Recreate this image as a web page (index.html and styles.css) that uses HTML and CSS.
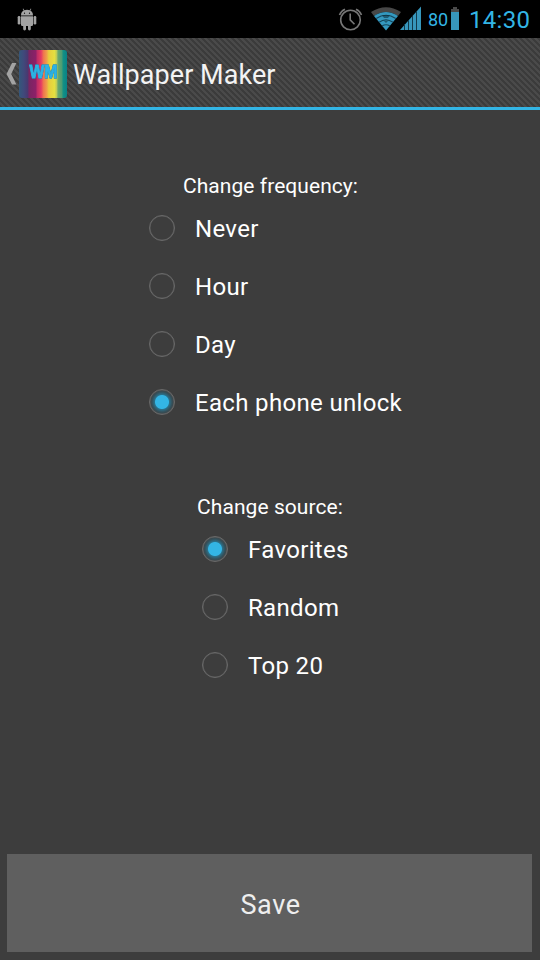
FILE: index.html
```html
<!DOCTYPE html>
<html lang="en">
<head>
<meta charset="utf-8">
<title>Wallpaper Maker</title>
<link rel="stylesheet" href="styles.css">
</head>
<body>
<header class="status">
  <svg class="droid" width="20" height="24" viewBox="0 0 20 24" fill="#a3a3a3">
    <path d="M4 7.4C4 4.8 5.2 3.4 6.7 2.6L5.7.9l.5-.4 1.2 1.8a8 8 0 0 1 5.2 0L13.8.5l.5.4-1 1.7C14.8 3.4 16 4.8 16 7.4Z"/>
    <path d="M4 8.200h12v8.600q0 1.200-1.200 1.200h-1v3a1.400 1.400 0 0 1-2.800 0v-3H9v3a1.400 1.400 0 0 1-2.800 0v-3h-1Q4 18 4 16.800Z"/>
    <rect x=".7" y="8" width="2.700" height="8.500" rx="1.300"/><rect x="16.600" y="8" width="2.700" height="8.500" rx="1.300"/>
    <circle cx="7.500" cy="5.200" r=".6" fill="#000"/><circle cx="12.500" cy="5.200" r=".6" fill="#000"/>
  </svg>
  <svg class="alarm" width="26" height="24" viewBox="0 0 26 24" fill="none" stroke="#777" stroke-width="1.600">
    <circle cx="12.500" cy="13" r="9.800"/>
    <path d="M12.200 6.500v6.300l4.300 4.400M1.500 8Q3 4 7 2.300M23.500 8Q22 4 18 2.300"/>
  </svg>
  <svg class="wifi" width="30" height="24" viewBox="0 0 30 24">
    <path d="M0 5Q15-4.500 30 5L27 9Q15 1 3 9Z" fill="#474747"/>
    <path d="M3 9Q15 1 27 9L15 23.500Z" fill="#3498bf"/>
    <path d="M5.200 11.500Q15 5 24.800 11.500M8 15.300Q15 10.500 22 15.300M11 19Q15 16.500 19 19" fill="none" stroke="#15455a" stroke-width="1.100"/>
    <path d="M11 8h8l-2 3h-4zM13 14h4l-2 2z" fill="#0b2937" opacity=".55"/>
  </svg>
  <svg class="signal" width="22" height="24" viewBox="0 0 22 24">
    <path d="M0 23 21 -.5V23Z" fill="#3796bb"/>
    <path d="M4.500 17v6M8.500 13v10M12.500 9v14M16.500 4v19" stroke="#12394a" stroke-width="1"/>
  </svg>
  <span class="percent">80</span>
  <svg class="battery" width="8" height="23" viewBox="0 0 8 23"><path d="M2 0h4v2h2v3H0V2h2Z" fill="#4a4a4a"/><path d="M0 5h8v18H0Z" fill="#3796bb"/></svg>
  <time class="clock">14:30</time>
</header>
<nav class="bar">
  <svg class="back" width="11" height="22" viewBox="0 0 11 22"><path d="M6 0H10.400L5.200 11l5.200 10.500H6L.5 11Z" fill="#a3a3a3"/></svg>
  <svg class="logo" width="48" height="48" viewBox="0 0 48 48">
    <defs><linearGradient id="rainbow">
      <stop offset="0" stop-color="#34587b"/><stop offset=".1" stop-color="#40497b"/><stop offset=".18" stop-color="#493970"/>
      <stop offset=".21" stop-color="#782562"/><stop offset=".35" stop-color="#8d2068"/>
      <stop offset=".38" stop-color="#bd2d66"/><stop offset=".46" stop-color="#e53b64"/>
      <stop offset=".51" stop-color="#ee754f"/><stop offset=".58" stop-color="#efa049"/>
      <stop offset=".62" stop-color="#e7cc3d"/><stop offset=".74" stop-color="#e5df40"/>
      <stop offset=".79" stop-color="#b5c85c"/><stop offset=".81" stop-color="#6ba86d"/><stop offset=".89" stop-color="#4c9c73"/>
      <stop offset=".92" stop-color="#139084"/><stop offset="1" stop-color="#078288"/>
    </linearGradient></defs>
    <rect width="48" height="48" rx="3" fill="url(#rainbow)"/>
    <text class="wm" x="10.500" y="28.300" textLength="28" lengthAdjust="spacingAndGlyphs">WM</text>
  </svg>
  <h1 class="title">Wallpaper Maker</h1>
</nav>
<main class="content">
  <section class="group frequency">
    <h2 class="heading"><span>Change frequency:</span></h2>
    <div class="option"><i class="radio"></i><span>Never</span></div>
    <div class="option"><i class="radio"></i><span>Hour</span></div>
    <div class="option"><i class="radio"></i><span>Day</span></div>
    <div class="option"><i class="radio on"></i><span>Each phone unlock</span></div>
  </section>
  <section class="group source">
    <h2 class="heading"><span>Change source:</span></h2>
    <div class="option"><i class="radio on"></i><span>Favorites</span></div>
    <div class="option"><i class="radio"></i><span>Random</span></div>
    <div class="option"><i class="radio"></i><span>Top 20</span></div>
  </section>
</main>
<button class="save">Save</button>
</body>
</html>
```
FILE: styles.css
```css
* { box-sizing: border-box; }
body {
  margin: 0;
  width: 540px;
  height: 960px;
  overflow: hidden;
  display: flex;
  flex-direction: column;
  background: #3d3d3d;
  color: #fff;
  font-family: Roboto, "Liberation Sans", sans-serif;
}
svg { display: block; flex: none; overflow: visible; }
.status {
  height: 38px;
  flex: none;
  display: flex;
  align-items: flex-start;
  padding: 7px 9px 0 17px;
  background: #000;
  color: #33b5e5;
}
.droid { margin-top: 1px; }
.alarm { margin: 0 7px 0 auto; }
.signal { margin-left: -1px; }
.percent {
  width: 23px;
  margin-left: 6px;
  font-size: 18px;
  line-height: 26px;
}
.clock {
  width: 62px;
  margin-left: 10px;
  font-size: 24px;
  line-height: 26px;
  letter-spacing: .3px;
  white-space: nowrap;
}
.bar {
  height: 72px;
  flex: none;
  display: flex;
  align-items: center;
  padding-left: 6px;
  border-bottom: 3px solid #33b5e5;
  background: repeating-linear-gradient(45deg, #3b3b3b 0 1.400px, #4a4a4a 2.100px 3.500px, #3b3b3b 4.243px);
}
.logo { margin: 2px 0 0 2px; }
.back { margin-top: 3px; }
.wm {
  font: bold 19px "Liberation Sans", sans-serif;
  fill: #2db3e4;
  stroke: #2db3e4;
  stroke-width: 1px;
  filter: drop-shadow(0 0 .7px #1c5276);
}
.title {
  margin: 5px 0 0 6px;
  font-size: 27px;
  line-height: 32px;
  font-weight: 400;
  letter-spacing: .06px;
  color: #f3f3f3;
  white-space: nowrap;
}
.content {
  flex: 1;
  display: flex;
  flex-direction: column;
  align-items: center;
  padding-top: 62px;
}
.group { display: flex; flex-direction: column; }
.frequency { width: 254px; margin-left: 12px; }
.source { width: 146px; margin: 61px 0 0 10px; }
.heading {
  margin: 0 0 0 -11px;
  height: 28px;
  font-size: 21px;
  line-height: 28px;
  font-weight: 400;
  letter-spacing: .06px;
  text-align: center;
  white-space: nowrap;
}
.source .heading { margin-left: -10px; }
.option {
  height: 58px;
  display: flex;
  align-items: center;
  gap: 20px;
  font-size: 24px;
  line-height: 28px;
  letter-spacing: .33px;
  white-space: nowrap;
}
.radio {
  width: 26px;
  height: 26px;
  flex: none;
  margin-bottom: 2px;
  border: 1px solid #6a6a6a;
  border-radius: 50%;
  box-shadow: inset 0 0 0 .5px #5a5a5a;
}
.on {
  background: radial-gradient(circle, #33b5e5 0 6.500px, #2b6f88 7.500px, #35505a 10px, #3c4549 12px);
}
.save {
  height: 98px;
  flex: none;
  margin: 0 8px 8px 7px;
  padding: 4px 0 0 2px;
  border: 0;
  background: #5f5f5f;
  color: #eee;
  font: 27px Roboto, sans-serif;
  letter-spacing: .6px;
}
```
